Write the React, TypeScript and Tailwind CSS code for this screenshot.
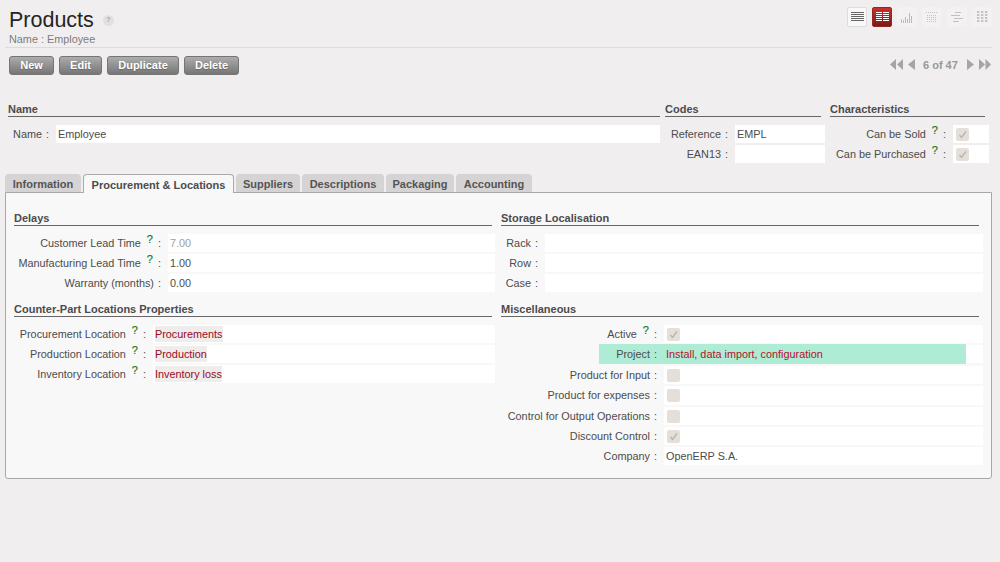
import type { ReactNode } from 'react';

const labelColor = 'text-[#4c4c4c]';

function Help() {
  return <sup className="ml-[6px] mr-[1px] top-[-4px] text-[11px] leading-none text-[#1f7a1f] [-webkit-text-stroke:0.2px_#1f7a1f]">?</sup>;
}

function SectionHeader({ title }: { title: string }) {
  return (
    <div className="flex h-[19px] items-end border-b border-[#666] pb-[1px] text-[11px] font-bold leading-[12px] text-[#4c4c4c]">
      {title}
    </div>
  );
}

function Check({ on }: { on: boolean }) {
  return (
    <span className="ml-px flex h-[13px] w-[13px] items-center justify-center rounded-[2px] bg-[#e4dfd8]">
      {on && (
        <svg width="11" height="11" viewBox="0 0 11 11" fill="none">
          <path d="M2.5 6 L4.5 8.5 L9 2.5" stroke="#b9b5ae" strokeWidth="1.3" />
        </svg>
      )}
    </span>
  );
}

function Row({
  label,
  help,
  tall,
  labelWidth,
  children,
}: {
  label: string;
  help?: boolean;
  tall?: boolean;
  labelWidth: string;
  children?: ReactNode;
}) {
  return (
    <div className={`flex ${tall ? 'h-[21px]' : 'h-[20px]'} items-stretch pb-[2px]`}>
      <div className={`${labelWidth} flex shrink-0 items-center justify-end pr-[7px] ${labelColor}`}>
        <span>{label}</span>
        {help && <Help />}
        <span className="ml-[4px]">:</span>
      </div>
      <div className="flex min-w-0 flex-1 items-center bg-white pl-[2px]">{children}</div>
    </div>
  );
}

function Many2one({ children }: { children: string }) {
  return <span className="bg-[#efecec] text-[#9a0a24]">{children}</span>;
}

function ToolbarButton({ text, width }: { text: string; width: string }) {
  return (
    <button
      className={`${width} h-[19px] rounded-[3px] border border-[#757575] bg-gradient-to-b from-[#adadad] to-[#767676] text-[11px] font-bold leading-none text-white [text-shadow:0_1px_1px_#666]`}
    >
      {text}
    </button>
  );
}

function ViewIcon({ active, dim, children }: { active?: boolean; dim?: boolean; children: ReactNode }) {
  return (
    <div
      className={`flex h-[20px] w-[20px] items-center justify-center rounded-[2px] ${
        active
          ? 'border border-[#8d2a24] bg-gradient-to-b from-[#c9322b] to-[#7c1a16]'
          : dim
            ? 'bg-[#f3f1f1]'
            : 'border border-[#ddd] bg-[#f8f8f8]'
      }`}
    >
      {children}
    </div>
  );
}

function Views() {
  return (
    <div className="flex gap-[5px]">
      <ViewIcon>
        <svg width="13" height="10" viewBox="0 0 13 10" stroke="#666" strokeWidth="1">
          <path d="M0 .5H13M0 2.5H13M0 4.5H13M0 6.5H13M0 8.5H13" />
        </svg>
      </ViewIcon>
      <ViewIcon active>
        <svg width="13" height="10" viewBox="0 0 13 10" stroke="#fff" strokeWidth="1">
          <path d="M0 .5H6M7 .5H13M0 2.5H6M7 2.5H13M0 4.5H6M7 4.5H13M0 6.5H6M7 6.5H13M0 8.5H6M7 8.5H13" />
        </svg>
      </ViewIcon>
      <ViewIcon dim>
        <svg width="12" height="12" viewBox="0 0 12 12" stroke="#bbb" strokeWidth="1">
          <path d="M.5 12V8M2.5 12V9M4.5 12V6M6.5 12V8M8.5 12V2M10.5 12V5" />
        </svg>
      </ViewIcon>
      <ViewIcon dim>
        <svg width="12" height="12" viewBox="0 0 12 12" stroke="#c4c4c4" strokeWidth="1" strokeDasharray="1 1">
          <path d="M0 1.5H12M1 4.5H11M1 6.5H11M1 8.5H11M1 10.5H11" />
        </svg>
      </ViewIcon>
      <ViewIcon dim>
        <svg width="12" height="11" viewBox="0 0 12 11" stroke="#c0c0c0" strokeWidth="1">
          <path d="M4 .5H10M0 3.5H9M3 6.5H12M2 9.5H8" />
        </svg>
      </ViewIcon>
      <ViewIcon dim>
        <svg width="11" height="12" viewBox="0 0 11 12" fill="#c4c4c4">
          {[0, 4, 8].map((x) =>
            [0, 3, 6, 9].map((y) => <rect key={`${x}-${y}`} x={x} y={y} width="2.4" height="2" />),
          )}
        </svg>
      </ViewIcon>
    </div>
  );
}

function Pager() {
  return (
    <div className="flex items-center text-[11px] font-bold text-[#999]">
      <svg width="13" height="11" viewBox="0 0 13 11" fill="#a5a5a5">
        <path d="M6 0V11L0 5.5ZM13 0V11L7 5.5Z" />
      </svg>
      <svg className="ml-[5px]" width="7" height="11" viewBox="0 0 7 11" fill="#a5a5a5">
        <path d="M7 0V11L0 5.5Z" />
      </svg>
      <span className="ml-[8px] w-[35px] whitespace-nowrap">6 of 47</span>
      <svg className="ml-[9px]" width="7" height="11" viewBox="0 0 7 11" fill="#a5a5a5">
        <path d="M0 0V11L7 5.5Z" />
      </svg>
      <svg className="ml-[5px]" width="12" height="11" viewBox="0 0 12 11" fill="#a5a5a5">
        <path d="M0 0V11L6 5.5ZM6.5 0V11L12 5.5Z" />
      </svg>
    </div>
  );
}

const tabs = [
  { name: 'Information', width: 'w-[76px]' },
  { name: 'Procurement & Locations', width: 'w-[151px]', active: true },
  { name: 'Suppliers', width: 'w-[64px]' },
  { name: 'Descriptions', width: 'w-[82px]' },
  { name: 'Packaging', width: 'w-[68px]' },
  { name: 'Accounting', width: 'w-[76px]' },
];

export default function App() {
  return (
    <div className="h-[562px] w-[1000px] overflow-hidden bg-[#f0eeee] font-['Liberation_Sans',Arial,sans-serif] text-[10.85px] text-[#4c4c4c]">
      {/* title bar */}
      <div className="mx-[5px] flex h-[48px] w-[987px] justify-between border-b border-[#dcdcdc] pl-[4px]">
        <div>
          <div className="flex h-[32px] items-end">
            <h1 className="text-[21.5px] leading-[24px] text-[#252525]">Products</h1>
            <span className="mb-[6px] ml-[9px] flex h-[11px] w-[11px] items-center justify-center rounded-full bg-[#e2e0e0] text-[7px] font-bold text-[#aaa]">
              ?
            </span>
          </div>
          <div className="leading-[14px] text-[#7d7d7d]">Name : Employee</div>
        </div>
        <div className="pt-[7px]">
          <Views />
        </div>
      </div>

      {/* actions */}
      <div className="flex h-[27px] w-[991px] items-end justify-between pl-[9px]">
        <div className="flex gap-[5px]">
          <ToolbarButton text="New" width="w-[45px]" />
          <ToolbarButton text="Edit" width="w-[43px]" />
          <ToolbarButton text="Duplicate" width="w-[72px]" />
          <ToolbarButton text="Delete" width="w-[55px]" />
        </div>
        <div className="pb-[2px]">
          <Pager />
        </div>
      </div>

      {/* head form */}
      <div className="flex pl-[8px] pt-[23px]">
        <div className="w-[652px]">
          <SectionHeader title="Name" />
          <div className="pt-[8px]">
            <Row label="Name" labelWidth="w-[48px]">Employee</Row>
          </div>
        </div>
        <div className="ml-[5px] w-[160px]">
          <div className="w-[156px]">
            <SectionHeader title="Codes" />
          </div>
          <div className="pt-[8px]">
            <Row label="Reference" labelWidth="w-[70px]">EMPL</Row>
            <Row label="EAN13" labelWidth="w-[70px]" />
          </div>
        </div>
        <div className="ml-[5px] w-[159px]">
          <div className="w-[155px]">
            <SectionHeader title="Characteristics" />
          </div>
          <div className="pt-[8px]">
            <Row label="Can be Sold" help labelWidth="w-[123px]">
              <Check on />
            </Row>
            <Row label="Can be Purchased" help labelWidth="w-[123px]">
              <Check on />
            </Row>
          </div>
        </div>
      </div>

      {/* tabs */}
      <div className="flex gap-[2px] pl-[5px] pt-[9px] text-[11px]">
        {tabs.map((tab) => (
          <div
            key={tab.name}
            className={
              tab.active
                ? `${tab.width} relative z-10 -mb-px h-[19px] rounded-t-[4px] border border-b-0 border-[#aaa] bg-[#f8f8f8] pt-[3px] text-center font-bold leading-[14px] text-[#4c4c4c]`
                : `${tab.width} h-[18px] rounded-t-[4px] bg-[#d5d3d3] pt-[3px] text-center font-bold leading-[14px] text-[#555]`
            }
          >
            {tab.name}
          </div>
        ))}
      </div>

      {/* panel */}
      <div className="ml-[5px] h-[287px] w-[987px] rounded-b-[3px] border border-[#a8a8a8] bg-[#f8f8f8] pl-[8px] pt-[14px]">
        <div className="grid grid-cols-[481px_482px] gap-x-[6px]">
          <div>
            <div className="w-[478px]">
              <SectionHeader title="Delays" />
            </div>
            <div className="pt-[8px]">
              <Row label="Customer Lead Time" help labelWidth="w-[154px]">
                <span className="text-[#a0a0a0]">7.00</span>
              </Row>
              <Row label="Manufacturing Lead Time" help labelWidth="w-[154px]">1.00</Row>
              <Row label="Warranty (months)" labelWidth="w-[154px]">0.00</Row>
            </div>
            <div className="mt-[4px] w-[478px]">
              <SectionHeader title="Counter-Part Locations Properties" />
            </div>
            <div className="pt-[8px]">
              <Row label="Procurement Location" help labelWidth="w-[139px]">
                <Many2one>Procurements</Many2one>
              </Row>
              <Row label="Production Location" help labelWidth="w-[139px]">
                <Many2one>Production</Many2one>
              </Row>
              <Row label="Inventory Location" help labelWidth="w-[139px]">
                <Many2one>Inventory loss</Many2one>
              </Row>
            </div>
          </div>
          <div>
            <div className="w-[478px]">
              <SectionHeader title="Storage Localisation" />
            </div>
            <div className="pt-[8px]">
              <Row label="Rack" labelWidth="w-[44px]" />
              <Row label="Row" labelWidth="w-[44px]" />
              <Row label="Case" labelWidth="w-[44px]" />
            </div>
            <div className="mt-[4px] w-[478px]">
              <SectionHeader title="Miscellaneous" />
            </div>
            <div className="pt-[8px]">
              <Row label="Active" help labelWidth="w-[163px]">
                <Check on />
              </Row>
              <div className="flex h-[21px]">
                <div className="-mt-px ml-[98px] flex h-[20px] w-[367px] shrink-0 bg-[#aeecd5]">
                  <div className="flex w-[65px] shrink-0 items-center justify-end pr-[7px] text-[#4c4c4c]">
                    Project<span className="ml-[4px]">:</span>
                  </div>
                  <div className="flex items-center pl-[2px] text-[#b5102a]">Install, data import, configuration</div>
                </div>
                <div className="mb-[3px] flex-1 bg-white" />
              </div>
              <Row label="Product for Input" labelWidth="w-[163px]">
                <Check on={false} />
              </Row>
              <Row label="Product for expenses" tall labelWidth="w-[163px]">
                <Check on={false} />
              </Row>
              <Row label="Control for Output Operations" labelWidth="w-[163px]">
                <Check on={false} />
              </Row>
              <Row label="Discount Control" labelWidth="w-[163px]">
                <Check on />
              </Row>
              <Row label="Company" labelWidth="w-[163px]">OpenERP S.A.</Row>
            </div>
          </div>
        </div>
      </div>
    </div>
  );
}
